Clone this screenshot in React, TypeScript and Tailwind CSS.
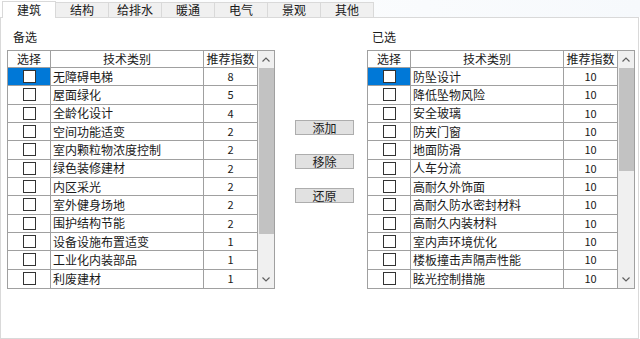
import React from "react";

const candidates: [string, string][] = [
  ["无障碍电梯", "8"],
  ["屋面绿化", "5"],
  ["全龄化设计", "4"],
  ["空间功能适变", "2"],
  ["室内颗粒物浓度控制", "2"],
  ["绿色装修建材", "2"],
  ["内区采光", "2"],
  ["室外健身场地", "2"],
  ["围护结构节能", "2"],
  ["设备设施布置适变", "1"],
  ["工业化内装部品", "1"],
  ["利废建材", "1"],
];

const selected: [string, string][] = [
  ["防坠设计", "10"],
  ["降低坠物风险", "10"],
  ["安全玻璃", "10"],
  ["防夹门窗", "10"],
  ["地面防滑", "10"],
  ["人车分流", "10"],
  ["高耐久外饰面", "10"],
  ["高耐久防水密封材料", "10"],
  ["高耐久内装材料", "10"],
  ["室内声环境优化", "10"],
  ["楼板撞击声隔声性能", "10"],
  ["眩光控制措施", "10"],
];

const tabs = ["建筑", "结构", "给排水", "暖通", "电气", "景观", "其他"];

function Check() {
  return <div className="w-[13px] h-[13px] border border-[#333] bg-white" />;
}

function Grid({ rows, thumb }: { rows: [string, string][]; thumb: number }) {
  return (
    <div className="flex w-[268px] h-[239px] border border-[#a0a0a0] bg-white">
      <div className="flex-1 flex flex-col">
        {/* header */}
        <div className="flex h-[17px] border-b border-[#a0a0a0]">
          <div className="w-[43px] border-r border-[#a0a0a0] flex items-center justify-center">选择</div>
          <div className="w-[153px] border-r border-[#a0a0a0] flex items-center justify-center">技术类别</div>
          <div className="flex-1 border-r border-[#a0a0a0] flex items-center justify-center">推荐指数</div>
        </div>
        {rows.map(([name, score], i) => (
          <div key={i} className="flex h-[18.5px] border-b border-[#a0a0a0] last:border-b-0">
            <div className={`w-[43px] border-r border-[#a0a0a0] flex items-center justify-center ${i === 0 ? "bg-[#0078d7]" : ""}`}>
              <Check />
            </div>
            <div className="w-[153px] border-r border-[#a0a0a0] flex items-center pl-[2px]">{name}</div>
            <div className="flex-1 border-r border-[#a0a0a0] flex items-center justify-center text-[11px]">{score}</div>
          </div>
        ))}
      </div>
      {/* scrollbar */}
      <div className="w-[16px] bg-[#f0f0f0] flex flex-col items-center">
        <div className="h-[17px] flex items-center justify-center">
          <svg width="8" height="5" viewBox="0 0 8 5"><path d="M0.5 4.5 L4 1 L7.5 4.5" fill="none" stroke="#606060" strokeWidth="1.2" /></svg>
        </div>
        <div className="w-[15px] bg-[#c2c2c2]" style={{ height: thumb }} />
        <div className="flex-1" />
        <div className="h-[17px] flex items-center justify-center">
          <svg width="8" height="5" viewBox="0 0 8 5"><path d="M0.5 0.5 L4 4 L7.5 0.5" fill="none" stroke="#606060" strokeWidth="1.2" /></svg>
        </div>
      </div>
    </div>
  );
}

export default function App() {
  return (
    <div className="w-[640px] h-[339px] bg-white text-[12px] text-[#1a1a1a] leading-none" style={{ fontFamily: '"Noto Sans CJK SC", "Liberation Sans", sans-serif' }}>
      {/* -------- tabs -------- */}
      <div className="flex items-end h-[17px] pl-[2px] bg-gradient-to-r from-white to-[#f6f9fc]">
        {tabs.map((t, i) =>
          i === 0 ? (
            <div key={t} className="w-[54px] h-[17px] bg-white border-t border-l border-r border-[#d9d9d9] flex items-center justify-center -mb-px relative z-10">{t}</div>
          ) : (
            <div key={t} className="w-[53px] h-[15px] bg-[#f0f0f0] border-t border-r border-[#d9d9d9] flex items-center justify-center">{t}</div>
          )
        )}
        <div className="flex-1" />
      </div>

      {/* -------- tab page -------- */}
      <div className="h-[322px] w-[639px] border border-[#d9d9d9] bg-white flex pl-[6px] pt-[13px]">
        <div className="flex flex-col">
          <div className="h-[19px] pl-[6px]">备选</div>
          <Grid rows={candidates} thumb={166} />
        </div>

        <div className="w-[99px] flex flex-col items-center pt-[89px] gap-[19px]">
          <div className="w-[59px] h-[15px] bg-[#e1e1e1] border border-[#adadad] flex items-center justify-center">添加</div>
          <div className="w-[59px] h-[15px] bg-[#e1e1e1] border border-[#adadad] flex items-center justify-center">移除</div>
          <div className="w-[59px] h-[15px] bg-[#e1e1e1] border border-[#adadad] flex items-center justify-center">还原</div>
        </div>

        <div className="flex flex-col -ml-[7px]">
          <div className="h-[19px] pl-[5px]">已选</div>
          <Grid rows={selected} thumb={103} />
        </div>
      </div>
    </div>
  );
}
